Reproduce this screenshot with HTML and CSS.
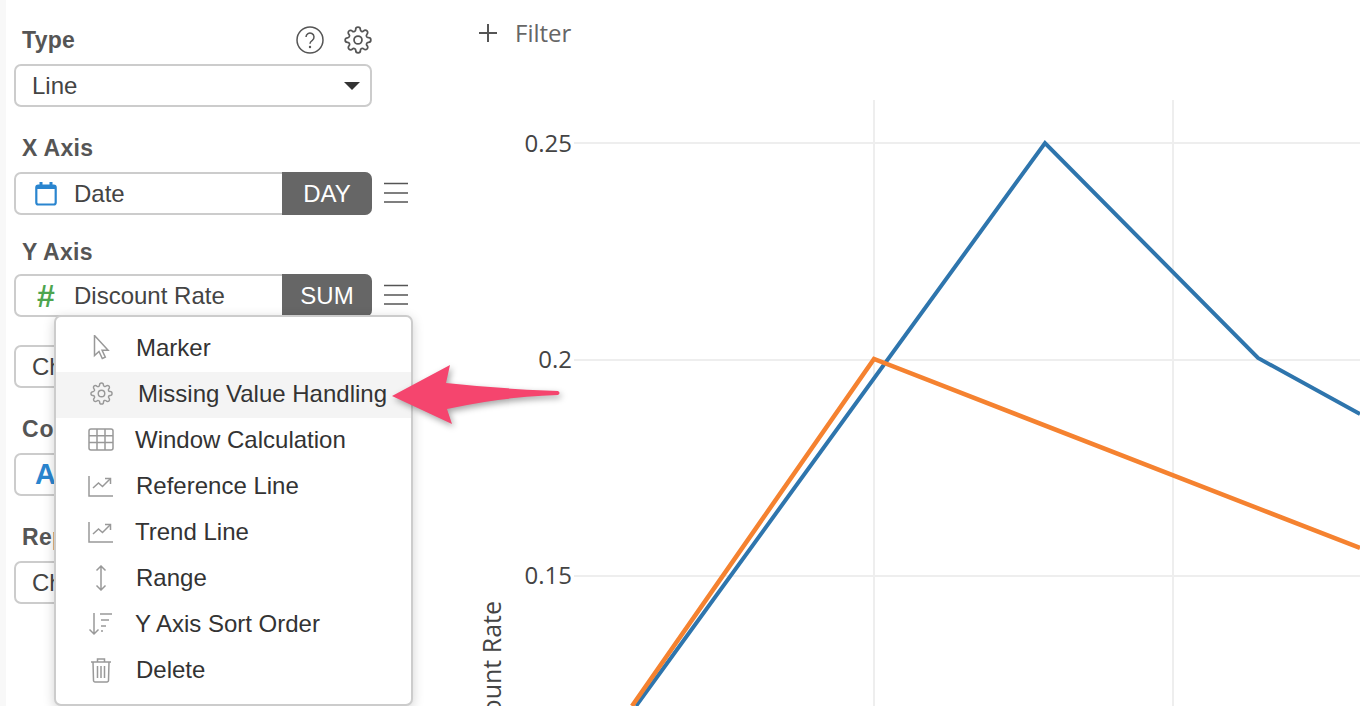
FILE: index.html
```html
<!DOCTYPE html>
<html lang="en">
<head>
<meta charset="utf-8">
<title>Chart settings</title>
<link rel="stylesheet" href="styles.css">
</head>
<body>
<svg class="defs" aria-hidden="true">
  <symbol id="gear" viewBox="0 0 24 24">
    <circle cx="12" cy="12" r="3.4"/>
    <path d="M19.4 15a1.65 1.65 0 0 0 .33 1.82l.06.06a2 2 0 0 1 0 2.83 2 2 0 0 1-2.83 0l-.06-.06a1.65 1.65 0 0 0-1.82-.33 1.65 1.65 0 0 0-1 1.51V21a2 2 0 0 1-2 2 2 2 0 0 1-2-2v-.09A1.65 1.65 0 0 0 9 19.4a1.65 1.65 0 0 0-1.82.33l-.06.06a2 2 0 0 1-2.83 0 2 2 0 0 1 0-2.83l.06-.06a1.65 1.65 0 0 0 .33-1.82 1.65 1.65 0 0 0-1.51-1H3a2 2 0 0 1-2-2 2 2 0 0 1 2-2h.09A1.65 1.65 0 0 0 4.6 9a1.65 1.65 0 0 0-.33-1.82l-.06-.06a2 2 0 0 1 0-2.83 2 2 0 0 1 2.83 0l.06.06a1.65 1.65 0 0 0 1.82.33H9a1.65 1.65 0 0 0 1-1.51V3a2 2 0 0 1 2-2 2 2 0 0 1 2 2v.09a1.65 1.65 0 0 0 1 1.51 1.65 1.65 0 0 0 1.82-.33l.06-.06a2 2 0 0 1 2.83 0 2 2 0 0 1 0 2.83l-.06.06a1.65 1.65 0 0 0-.33 1.82V9a1.65 1.65 0 0 0 1.51 1H21a2 2 0 0 1 2 2 2 2 0 0 1-2 2h-.09a1.65 1.65 0 0 0-1.51 1z"/>
  </symbol>
  <symbol id="burger" viewBox="0 0 24 20">
    <path d="M0 1h24M0 10.5h24M0 19.500h24"/>
  </symbol>
  <symbol id="trend" viewBox="0 0 26 26">
    <path d="M1 3v20h24"/>
    <path d="M5 15l5.500-5 4 3.500L22 6"/>
    <path d="M17 5.500h5.500V11"/>
  </symbol>
</svg>

<div class="gutter"></div>
<aside class="sidebar">
  <section class="group">
    <div class="head">
      <h2 class="label">Type</h2>
      <div class="head-icons">
        <svg class="help" viewBox="0 0 28 28"><circle cx="14" cy="14" r="13"/><path d="M10 11a4 4 0 1 1 6.300 3.300c-1.500 1-2.300 1.700-2.300 3.400"/><circle class="dot" cx="14" cy="21" r="1.200"/></svg>
        <svg class="gear-head"><use href="#gear"/></svg>
      </div>
    </div>
    <div class="control select">
      <span class="value">Line</span>
      <span class="caret"></span>
    </div>
  </section>

  <section class="group group-x">
    <h2 class="label">X Axis</h2>
    <div class="row">
      <div class="control pill">
        <svg class="cal" viewBox="0 0 22 25"><rect x="1.300" y="4.500" width="19.400" height="19" rx="2"/><path class="tick" d="M1.300 6.500h19.400"/><path class="tick" d="M6 1v4M16 1v4"/></svg>
        <span class="value field">Date</span>
        <span class="agg">DAY</span>
      </div>
      <svg class="burger"><use href="#burger"/></svg>
    </div>
  </section>

  <section class="group group-y">
    <h2 class="label">Y Axis</h2>
    <div class="row">
      <div class="control pill">
        <span class="hash">#</span>
        <span class="value field">Discount Rate</span>
        <span class="agg">SUM</span>
      </div>
      <svg class="burger"><use href="#burger"/></svg>
    </div>
  </section>

  <section class="group">
    <div class="control select"><span class="value">Choose</span></div>
  </section>

  <section class="group">
    <h2 class="label label-wide">Color</h2>
    <div class="control pill"><span class="abc">A</span></div>
  </section>

  <section class="group">
    <h2 class="label">Repeat</h2>
    <div class="control select"><span class="value">Choose</span></div>
  </section>
</aside>

<main class="main">
  <div class="filter">
    <svg class="plus" viewBox="0 0 20 20"><path d="M10 1v18M1 10h18"/></svg>
    <span>Filter</span>
  </div>
  <svg class="chart" viewBox="424 0 936 706" width="936" height="706">
    <g class="grid">
      <path d="M574 143H1360M574 360H1360M574 576H1360"/>
      <path d="M874 100V706M1173 100V706"/>
    </g>
    <g class="ticks">
      <text x="572" y="152">0.25</text>
      <text x="572" y="368">0.2</text>
      <text x="572" y="584">0.15</text>
    </g>
    <text class="axis-title" transform="translate(501 601) rotate(-90)">Discount Rate</text>
    <polyline class="blue" points="636,706 1045,143 1258,358 1360,414"/>
    <polyline class="orange" points="632,706 874,359 1360,548"/>
  </svg>
</main>

<div class="menu">
  <div class="item">
    <svg class="ico" viewBox="0 0 26 26"><path d="M6.500 .5v20l4.500-4 3.300 7 3-1.400-3.200-6.800h6z"/></svg>
    <span class="t0">Marker</span>
  </div>
  <div class="item active">
    <svg class="ico" viewBox="0 0 26 26"><use href="#gear" x="2" y="1" width="23" height="23"/></svg>
    <span class="t2">Missing Value Handling</span>
  </div>
  <div class="item">
    <svg class="ico" viewBox="0 0 26 26"><rect x="1" y="2" width="24" height="21" rx="2"/><path d="M1 8.800h24M1 15.500h24M9 2v21M17 2v21"/></svg>
    <span>Window Calculation</span>
  </div>
  <div class="item">
    <svg class="ico"><use href="#trend"/></svg>
    <span class="t0">Reference Line</span>
  </div>
  <div class="item">
    <svg class="ico"><use href="#trend"/></svg>
    <span>Trend Line</span>
  </div>
  <div class="item">
    <svg class="ico" viewBox="0 0 26 26"><path d="M13 1v24M8.500 5.500L13 1l4.500 4.500M8.500 20.500L13 25l4.500-4.500"/></svg>
    <span class="t0">Range</span>
  </div>
  <div class="item">
    <svg class="ico" viewBox="0 0 26 26"><path d="M6 2v21M1.500 18.500L6 23l4.500-4.500M12 3h12M13 9h8M13 15h5M13 20h2"/></svg>
    <span>Y Axis Sort Order</span>
  </div>
  <div class="item">
    <svg class="ico" viewBox="0 0 26 26"><path d="M3 5h20M9.500 5V2h7v3M5 5l.5 18.500a1.500 1.500 0 0 0 1.500 1.500h12a1.500 1.500 0 0 0 1.500-1.500L21 5M9.500 9v12M13 9v12M16.500 9v12"/></svg>
    <span class="t0">Delete</span>
  </div>
</div>

<svg class="arrow" viewBox="0 0 180 70" width="180" height="70">
  <path d="M2 36 L60 5 L56 23 Q110 29 168 31 Q171 33 168 35 Q110 37 57 49 L62 64 Z"/>
</svg>
</body>
</html>
```
FILE: styles.css
```css
* { box-sizing: border-box; }
html, body { margin: 0; height: 706px; overflow: hidden; }
body {
  display: flex;
  position: relative;
  background: #fff;
  font-family: "Liberation Sans", Arial, sans-serif;
  color: #333;
}
.defs { position: absolute; width: 0; height: 0; }
.gutter { width: 6px; flex: none; background: #f8f8f8; }

.sidebar { width: 418px; flex: none; padding: 26px 0 0 9px; background: #fff; }
.group { width: 400px; margin-bottom: 27px; }
.group-x { margin-bottom: 23px; }
.group-y { margin-bottom: 28px; }
.label { margin: 0 0 10px 7px; font-size: 23px; line-height: 28px; font-weight: 700; letter-spacing: .3px; color: #555; }
.label-wide { letter-spacing: .8px; }
.group-y .label { margin-bottom: 8px; }
.head { display: flex; justify-content: space-between; width: 357px; height: 28px; margin-bottom: 10px; }
.head-icons { display: flex; align-items: center; gap: 20px; }
.head .label { margin-bottom: 0; }
.help { width: 28px; height: 28px; fill: none; stroke: #555; stroke-width: 1.500; }
.help .dot { fill: #555; stroke: none; }
.gear-head { width: 28px; height: 28px; fill: none; stroke: #555; stroke-width: 1.500; }

.control {
  display: flex;
  align-items: center;
  width: 358px;
  height: 43px;
  margin-left: -1px;
  border: 2px solid #ccc;
  border-radius: 7px;
  background: #fff;
  font-size: 24px;
  color: #444;
}
.select { padding: 0 10px 0 16px; justify-content: space-between; }
.caret { width: 0; height: 0; border: 8px solid transparent; border-top-color: #333; border-bottom: 0; }
.row { display: flex; align-items: center; }
.pill { padding-left: 19px; }
.cal { width: 22px; height: 25px; flex: none; fill: none; stroke: #2a85cf; stroke-width: 2.200; }
.cal .tick { stroke-width: 3; }
.hash { width: 22px; flex: none; text-align: center; font-size: 32px; line-height: 1; font-weight: 700; color: #4ea54f; }
.field { margin-left: 17px; }
.abc { font-size: 29px; font-weight: 700; color: #2a85cf; }
.agg {
  margin: -2px -2px -2px auto;
  width: 90px;
  height: 43px;
  background: #666;
  color: #fff;
  border-radius: 0 7px 7px 0;
  text-align: center;
  line-height: 44px;
}
.burger { width: 24px; height: 21px; margin: -3px 0 0 12px; fill: none; stroke: #555; stroke-width: 1.700; }

.main { flex: 1; position: relative; min-width: 0; }
.filter { position: absolute; top: 19px; left: 54px; display: flex; align-items: center; gap: 17px; font-family: "Open Sans", sans-serif; font-size: 24px; line-height: 28px; color: #666; }
.plus { width: 20px; height: 20px; fill: none; stroke: #555; stroke-width: 2; }
.chart { display: block; }
.grid path { fill: none; stroke: #eee; stroke-width: 2; }
.ticks text { font-family: "Open Sans", sans-serif; font-size: 24px; fill: #444; text-anchor: end; }
.axis-title { font-family: "Open Sans", sans-serif; font-size: 25px; fill: #444; text-anchor: end; }
.blue, .orange { fill: none; stroke-linejoin: miter; }
.blue { stroke: #2e75ad; stroke-width: 4; }
.orange { stroke: #f58230; stroke-width: 4.500; }

.menu {
  position: absolute;
  left: 54px;
  top: 315px;
  width: 359px;
  height: 391px;
  padding-top: 9px;
  background: #fff;
  border: 2px solid #ccc;
  border-radius: 7px;
  box-shadow: 0 3px 12px rgba(0, 0, 0, .18);
  font-size: 24px;
  color: #333;
}
.item { display: flex; align-items: center; height: 46px; padding: 0 0 2px 32px; }
.item.active { background: #f4f4f4; }
.ico { width: 26px; height: 26px; flex: none; margin-right: 21px; fill: none; stroke: #999; stroke-width: 1.500; }
.t0 { margin-left: 1px; }
.t2 { margin-left: 3px; }

.arrow { position: absolute; left: 390px; top: 360px; fill: #f5456e; filter: drop-shadow(2px 3px 3px rgba(0, 0, 0, .35)); }
```
